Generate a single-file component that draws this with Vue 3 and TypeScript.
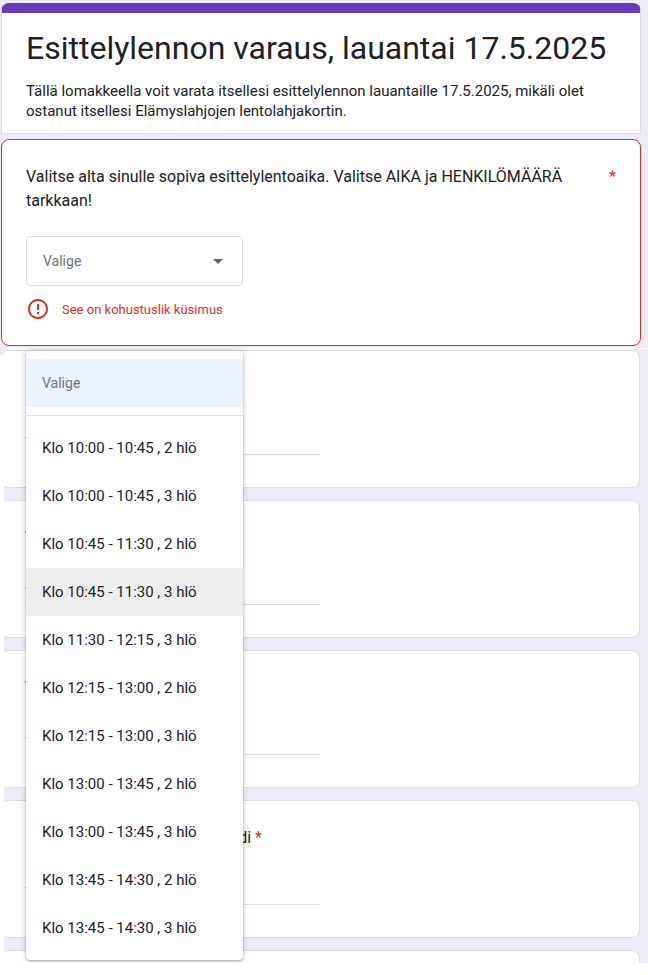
<script setup lang="ts">
import { ref } from 'vue'

interface TextQuestion {
  id: string
  label: string
  required: boolean
}

const placeholder = 'Valige'

const slots: string[] = [
  'Klo 10:00 - 10:45 , 2 hlö',
  'Klo 10:00 - 10:45 , 3 hlö',
  'Klo 10:45 - 11:30 , 2 hlö',
  'Klo 10:45 - 11:30 , 3 hlö',
  'Klo 11:30 - 12:15 , 3 hlö',
  'Klo 12:15 - 13:00 , 2 hlö',
  'Klo 12:15 - 13:00 , 3 hlö',
  'Klo 13:00 - 13:45 , 2 hlö',
  'Klo 13:00 - 13:45 , 3 hlö',
  'Klo 13:45 - 14:30 , 2 hlö',
  'Klo 13:45 - 14:30 , 3 hlö',
]

const questions: TextQuestion[] = [
  { id: 'name', label: 'Nimi', required: true },
  { id: 'phone', label: 'Varaajan puhelin', required: true },
  { id: 'email', label: 'Varaajan sähköposti', required: true },
  { id: 'code', label: 'Elämyslahjojen lahjakortti-koodi', required: true },
]

const selected = ref('')
const highlighted = ref(3)
const answers = ref<Record<string, string>>({})

function choose(slot: string) {
  selected.value = slot
}
</script>

<template>
  <main class="form">
    <section class="intro">
      <header class="card title-card">
        <h1 class="title">Esittelylennon varaus, lauantai 17.5.2025</h1>
        <p class="description">
          Tällä lomakkeella voit varata itsellesi esittelylennon lauantaille 17.5.2025, mikäli olet
          ostanut itsellesi Elämyslahjojen lentolahjakortin.
        </p>
      </header>

      <div class="card error-card">
        <div class="question">
          <label for="slot">Valitse alta sinulle sopiva esittelylentoaika. Valitse AIKA ja HENKILÖMÄÄRÄ tarkkaan!</label>
          <span class="star">*</span>
        </div>

        <div class="dropdown">
          <select id="slot" v-model="selected" class="select" aria-describedby="slot-error">
            <option value="">{{ placeholder }}</option>
            <option v-for="slot in slots" :key="slot" :value="slot">{{ slot }}</option>
          </select>
          <svg class="arrow" viewBox="0 0 10 5" aria-hidden="true"><path d="M0 0h10L5 5z" /></svg>

          <ul class="menu">
            <li class="menu-head">
              <button type="button" class="item item-empty" @click="choose('')">{{ placeholder }}</button>
            </li>
            <li v-for="(slot, i) in slots" :key="slot">
              <button
                type="button"
                class="item"
                :class="{ 'item-active': i === highlighted }"
                @mouseenter="highlighted = i"
                @click="choose(slot)"
              >{{ slot }}</button>
            </li>
          </ul>
        </div>

        <div id="slot-error" class="error">
          <svg class="error-icon" viewBox="0 0 24 24" aria-hidden="true">
            <path d="M11 15h2v2h-2zm0-8h2v6h-2zm.99-5C6.47 2 2 6.48 2 12s4.47 10 9.99 10C17.52 22 22 17.52 22 12S17.52 2 11.99 2zM12 20c-4.42 0-8-3.58-8-8s3.58-8 8-8 8 3.58 8 8-3.58 8-8 8z" />
          </svg>
          <span>See on kohustuslik küsimus</span>
        </div>
      </div>
    </section>

    <section class="rest">
      <div v-for="q in questions" :key="q.id" class="card text-card">
        <label class="text-label" :for="q.id">{{ q.label }} <span v-if="q.required" class="star">*</span></label>
        <input :id="q.id" v-model="answers[q.id]" class="text-input" type="text" placeholder="Teie vastus" />
      </div>
      <div class="card next-card"></div>
    </section>
  </main>
</template>

<style>
body {
  margin: 0;
  background: #fff;
}
</style>

<style scoped>
* {
  box-sizing: border-box;
}

.form {
  font-family: Roboto, "Liberation Sans", sans-serif;
  color: #202124;
}

.intro {
  display: flex;
  flex-direction: column;
  gap: 5px;
  padding: 3px 7px 9px 1px;
  background: #eeeaf7;
}

.card {
  background: #fff;
  border: 1px solid #dadce0;
  border-radius: 8px;
  padding: 25px 24px 24px;
}

.title-card {
  border-top: 10px solid #673ab7;
  border-radius: 8px 8px 0 0;
  padding: 15px 24px 12px;
}

.title {
  margin: 0 0 13px;
  font-size: 32px;
  line-height: 40px;
  font-weight: 400;
}

.description {
  margin: 0;
  font-size: 15px;
  line-height: 20px;
}

.error-card {
  border-color: #d93025;
}

.question {
  display: flex;
  justify-content: space-between;
  gap: 32px;
  font-size: 16px;
  line-height: 24px;
}

.star {
  color: #d93025;
}

.dropdown {
  position: relative;
  width: 217px;
  margin: 23px 0 11px;
}

.select {
  display: block;
  width: 100%;
  height: 50px;
  padding: 0 40px 0 16px;
  appearance: none;
  background: #fff;
  border: 1px solid #dadce0;
  border-radius: 4px;
  color: #70757a;
  font-family: inherit;
  font-size: 14px;
}

.arrow {
  position: absolute;
  top: 23px;
  right: 20px;
  width: 10px;
  height: 5px;
  fill: #5f6368;
  pointer-events: none;
}

.menu {
  position: absolute;
  top: 115px;
  left: 0;
  z-index: 2;
  width: 100%;
  margin: 0;
  padding: 8px 0;
  list-style: none;
  background: #fff;
  border-radius: 4px;
  box-shadow: 0 1px 2px rgba(60, 64, 67, 0.4), 0 0 6px rgba(60, 64, 67, 0.25);
}

.menu-head {
  margin-bottom: 8px;
  padding-bottom: 8px;
  border-bottom: 1px solid #dadce0;
}

.item {
  display: block;
  width: 100%;
  height: 48px;
  padding: 0 16px;
  border: 0;
  background: none;
  color: #202124;
  font-family: inherit;
  font-size: 15px;
  text-align: left;
}

.item-empty {
  background: #ecf3fe;
  color: #70757a;
  font-size: 14px;
}

.item-active {
  background: #eee;
}

.error {
  display: flex;
  align-items: center;
  gap: 12px;
  color: #d93025;
  font-size: 13px;
}

.error-icon {
  width: 24px;
  height: 24px;
  fill: currentColor;
}

.rest {
  display: flex;
  flex-direction: column;
  gap: 12px;
  margin: -7px 0 0 4px;
  padding: 1px 8px 0 0;
  overflow: hidden;
  background: #eeeaf7;
  border-top: 1px solid #fff;
}

.text-card,
.next-card {
  margin-left: -4px;
}

.text-label {
  display: block;
  font-size: 16px;
  line-height: 24px;
}

.text-input {
  display: block;
  width: 50%;
  height: 24px;
  margin: 31px 0 8px;
  padding: 0;
  border: 0;
  border-bottom: 1px solid #dadce0;
  background: none;
  color: inherit;
  font-family: inherit;
  font-size: 15px;
}

.next-card {
  height: 13px;
  padding: 0;
  border-bottom: 0;
  border-radius: 8px 8px 0 0;
}
</style>
